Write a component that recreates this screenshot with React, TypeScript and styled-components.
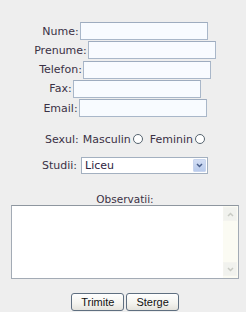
import React from "react";
import styled, { createGlobalStyle } from "styled-components";

const Global = createGlobalStyle`
  html, body { margin: 0; padding: 0; background: #eeeeee; }
  body { width: 246px; height: 312px; overflow: hidden; }
`;

const Page = styled.div`
  width: 246px;
  height: 312px;
  box-sizing: border-box;
  padding: 22px 0 0 4px;
  display: flex;
  flex-direction: column;
  align-items: center;
  font-family: "DejaVu Sans", Verdana, sans-serif;
  font-size: 11px;
  color: #3b3145;
`;

const Row = styled.div<{ $top?: number; $h?: number }>`
  display: flex;
  align-items: center;
  justify-content: center;
  height: ${(p) => p.$h ?? 18}px;
  margin-top: ${(p) => p.$top ?? 0}px;
  white-space: nowrap;
`;

const Label = styled.span<{ $gap?: number }>`
  margin-right: ${(p) => p.$gap ?? 1}px;
  line-height: 13px;
`;

const TextInput = styled.div`
  width: 128px;
  height: 18px;
  box-sizing: border-box;
  border: 1px solid #a9b7c9;
  border-top-color: #9eacbf;
  background: #f8fbff;
`;

const Radio = styled.span`
  display: inline-block;
  width: 10px;
  height: 10px;
  box-sizing: border-box;
  border: 1px solid #56646f;
  border-radius: 50%;
  background: #ffffff;
  margin: 0 0 1px 2px;
`;

const Spacer = styled.span<{ $w: number }>`
  display: inline-block;
  width: ${(p) => p.$w}px;
`;

const SelectBox = styled.div`
  width: 127px;
  height: 17px;
  box-sizing: border-box;
  border: 1px solid #a3b0c0;
  background: #ffffff;
  display: flex;
  align-items: center;
  padding: 1px 1px 1px 3px;
  color: #2e2440;
`;

const SelectText = styled.span`
  flex: 1;
  line-height: 13px;
`;

const ArrowBtn = styled.span`
  width: 13px;
  height: 13px;
  box-sizing: border-box;
  background: linear-gradient(#d3def4, #b9cbec);
  border: 1px solid #c8d5ee;
  border-radius: 1px;
  display: flex;
  align-items: center;
  justify-content: center;
`;

const ObsLabel = styled.div`
  margin-top: 19px;
  height: 12px;
  line-height: 12px;
  font-size: 10.5px;
  text-align: center;
`;

const TextArea = styled.div`
  width: 228px;
  height: 74px;
  box-sizing: border-box;
  border: 1px solid #a3abb5;
  border-top-color: #8e969f;
  background: #ffffff;
  display: flex;
  justify-content: flex-end;
`;

const ScrollBar = styled.div`
  width: 14px;
  background: #fbfbf3;
  display: flex;
  flex-direction: column;
  justify-content: space-between;
  padding: 1px 1px 2px 0;
`;

const ScrollBtn = styled.div`
  height: 12px;
  background: #f1f2ee;
  border: 1px solid #f4f4ef;
  display: flex;
  align-items: center;
  justify-content: center;
`;

const Buttons = styled.div`
  display: flex;
  gap: 2px;
  margin-top: 14px;
`;

const Button = styled.div`
  height: 18px;
  box-sizing: border-box;
  padding: 0 9px;
  border: 1px solid #5f6f80;
  border-radius: 3px;
  background: linear-gradient(#ffffff, #f3f3ee 60%, #e4e3dc);
  font-family: "Liberation Sans", Arial, sans-serif;
  font-size: 11px;
  color: #111111;
  display: flex;
  align-items: center;
  justify-content: center;
`;

const Chevron = ({ up, color }: { up?: boolean; color: string }) => (
  <svg width="7" height="5" viewBox="0 0 7 5">
    <path
      d={up ? "M1 4 L3.5 1.5 L6 4" : "M1 1 L3.5 3.5 L6 1"}
      fill="none"
      stroke={color}
      strokeWidth="1.5"
    />
  </svg>
);

const fields = ["Nume", "Prenume", "Telefon", "Fax", "Email"];

export default function App() {
  return (
    <>
      <Global />
      <Page>
        {fields.map((f, i) => (
          <Row key={f} $top={i === 0 ? 0 : 1.33}>
            <Label>{f}:</Label>
            <TextInput />
          </Row>
        ))}
        <Row $top={12.7}>
          <Label $gap={4}>Sexul:</Label>
          <Label $gap={0}>Masculin</Label>
          <Radio />
          <Spacer $w={7} />
          <Label $gap={0}>Feminin</Label>
          <Radio />
        </Row>
        <Row $top={9} $h={17}>
          <Label $gap={4}>Studii:</Label>
          <SelectBox>
            <SelectText>Liceu</SelectText>
            <ArrowBtn>
              <Chevron color="#4a5f8a" />
            </ArrowBtn>
          </SelectBox>
        </Row>
        <ObsLabel>Observatii:</ObsLabel>
        <TextArea>
          <ScrollBar>
            <ScrollBtn>
              <Chevron up color="#c9cbc4" />
            </ScrollBtn>
            <ScrollBtn>
              <Chevron color="#c9cbc4" />
            </ScrollBtn>
          </ScrollBar>
        </TextArea>
        <Buttons>
          <Button>Trimite</Button>
          <Button>Sterge</Button>
        </Buttons>
      </Page>
    </>
  );
}
